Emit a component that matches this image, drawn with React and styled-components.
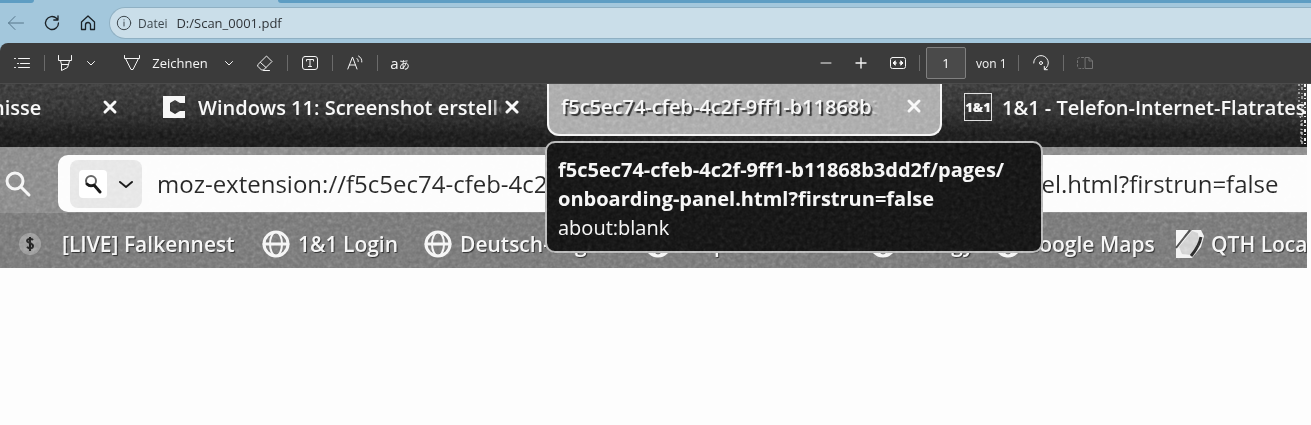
import React from 'react';
import styled, { createGlobalStyle } from 'styled-components';

const GlobalStyle = createGlobalStyle`
    * {
        box-sizing: border-box;
    }

    body {
        margin: 0;
        background: #fdfdfd;
        font-family: 'Open Sans', 'Noto Sans', sans-serif;
    }

    button {
        display: flex;
        align-items: center;
        justify-content: center;
        margin: 0;
        padding: 0;
        border: 0;
        background: none;
        color: inherit;
        font: inherit;
        cursor: pointer;
    }

    svg {
        display: block;
        flex: none;
    }
`;

const Page = styled.div`
    min-height: 100vh;
    overflow: hidden;
    background: #fdfdfd;
`;

/* Browser chrome */

const Chrome = styled.header`
    background: #a3c7dc;
`;

const TabStrip = styled.div`
    display: flex;
    height: 3px;
    gap: 244px;
`;

const TabEdge = styled.div`
    flex: ${({ $grow }) => ($grow ? '1' : '0 0 34px')};
    background: #5e9dc3;
    border-radius: ${({ $grow }) => ($grow ? '0 0 0 3px' : '0 0 3px 0')};
`;

const AddressRow = styled.div`
    display: flex;
    align-items: center;
    height: 40px;
    padding-left: 4px;
`;

const NavButton = styled.button`
    width: 24px;
    height: 24px;
    margin-right: 12px;
    color: #1b2227;

    &:disabled {
        color: #56768a;
    }
`;

const AddressField = styled.form`
    display: flex;
    flex: 1;
    align-items: center;
    height: 32px;
    margin-left: -3px;
    padding-left: 6px;
    border: 1px solid #8fb0c3;
    border-right: 0;
    border-radius: 16px 0 0 16px;
    background: #cadee9;
    color: #3d474d;
    font-size: 12px;
`;

const Scheme = styled.label`
    margin: 0 9px 0 6px;
    font-weight: 500;
`;

const AddressInput = styled.input`
    flex: 1;
    min-width: 0;
    padding: 0;
    border: 0;
    outline: 0;
    background: none;
    color: #303539;
    font: 13px 'Open Sans', sans-serif;
`;

/* PDF toolbar */

const ToolbarWrap = styled.div`
    background: #a3c7dc;
`;

const Toolbar = styled.div`
    display: flex;
    align-items: center;
    height: 41px;
    padding: 0 214px 0 10px;
    border-bottom: 1px solid #4b4b4b;
    border-radius: 8px 0 0 0;
    background: #3b3b3b;
    color: #f5f5f5;
    font-size: 13px;
`;

const Tool = styled.button`
    width: ${({ $w }) => $w || 24}px;
    height: 32px;
    gap: 12px;
    margin-right: ${({ $mr }) => $mr || 0}px;

    &:disabled {
        color: #747474;
    }
`;

const Divider = styled.span`
    width: 1px;
    height: 16px;
    margin-right: ${({ $mr }) => $mr || 0}px;
    background: #6b6b6b;
`;

const Spacer = styled.span`
    flex: 1;
`;

const PageInput = styled.input`
    width: 40px;
    height: 32px;
    margin: 0 10px 0 6px;
    padding: 0;
    border: 1px solid #808080;
    border-radius: 2px;
    background: #4a4a4a;
    color: #fff;
    font: 13px 'Open Sans', sans-serif;
    text-align: center;
`;

const PageCount = styled.label`
    width: 42px;
    font-size: 12px;
    white-space: nowrap;
`;

const Translate = styled.span`
    font: 15px 'Open Sans', 'Noto Sans CJK JP', sans-serif;

    small {
        font-size: 11px;
    }
`;

/* Scanned sheet */

const Sheet = styled.main`
    position: relative;
    margin-right: 4px;
    overflow: hidden;
`;

const Grain = styled.svg`
    position: absolute;
    inset: 0;
    width: 100%;
    height: 100%;
    pointer-events: none;
    mix-blend-mode: soft-light;
`;

const WornEdge = styled.svg`
    position: absolute;
    top: 0;
    right: 0;
    pointer-events: none;
`;

const ScanTabs = styled.div`
    display: flex;
    height: 63px;
    background: linear-gradient(#333 0, #282828 45%, #161616 80%);
    color: #f7f7f7;
    font-size: 20px;
    font-weight: 600;
`;

const ScanTab = styled.div`
    display: flex;
    flex: ${({ $w }) => ($w ? `0 0 ${$w}px` : '1 0 0')};
    align-items: center;
    min-width: 0;
    height: ${({ $active }) => ($active ? 52 : 46)}px;
    padding: ${({ $pad }) => $pad};
    border: ${({ $active }) => ($active ? '2px solid #f4f4f4' : '0')};
    border-top: 0;
    border-radius: 0 0 12px 12px;
    background: ${({ $active }) => ($active ? '#a6a6a6' : 'none')};
    text-shadow: ${({ $active }) => ($active ? '2px 2px 1px #222' : 'none')};
`;

const TabTitle = styled.span`
    flex: 1;
    min-width: 0;
    overflow: hidden;
    white-space: nowrap;
    mask-image: ${({ $fade }) => ($fade ? 'linear-gradient(to left, transparent, #000 10px)' : 'none')};
`;

const ScrolledTitle = styled(TabTitle)`
    margin-left: -8px;
`;

const Favicon = styled.span`
    display: flex;
    margin-right: 12px;
`;

const BoxLogo = styled.span`
    width: 28px;
    height: 28px;
    margin-right: 10px;
    border: 1px solid #ddd;
    font-size: 13px;
    font-weight: 800;
    line-height: 26px;
    text-align: center;
`;

const CloseButton = styled.button`
    width: 16px;
    height: 24px;
    margin-left: ${({ $ml }) => $ml || 8}px;
`;

const UrlRow = styled.div`
    display: flex;
    align-items: center;
    height: 66px;
    padding: 7px 0 0 2px;
    background: #858585;
    color: #f4f4f4;
`;

const UrlBar = styled.form`
    display: flex;
    flex: 1;
    align-items: center;
    height: 57px;
    margin-left: 26px;
    padding-left: 12px;
    border-radius: 10px 0 0 10px;
    background: #fcfcfc;
    color: #111;
`;

const EngineButton = styled.button`
    width: 72px;
    height: 48px;
    gap: 12px;
    margin-right: 15px;
    border-radius: 8px;
    background: #e5e5e5;
`;

const EngineIcon = styled.span`
    padding: 4px;
    border-radius: 4px;
    background: #fff;
`;

const UrlInput = styled.input`
    flex: 1;
    min-width: 0;
    padding: 0;
    border: 0;
    outline: 0;
    background: none;
    color: #1d1d1d;
    font: 24px 'Open Sans', sans-serif;
`;

const Bookmarks = styled.nav`
    display: flex;
    align-items: center;
    height: 55px;
    padding: 7px 0 0 18px;
    background: #727272;
`;

const Bookmark = styled.a`
    display: flex;
    flex: 0 0 ${({ $w }) => $w}px;
    align-items: center;
    gap: ${({ $gap }) => $gap || 8}px;
    color: #f5f5f5;
    font-size: 21px;
    font-weight: 600;
    line-height: 28px;
    text-decoration: none;
    text-shadow: 1px 1px 1px #222;
    white-space: nowrap;
`;

const Tooltip = styled.div`
    position: absolute;
    top: 57px;
    left: 545px;
    width: 498px;
    padding: 12px 11px 9px;
    border: 2px solid #b5b5b5;
    border-radius: 10px;
    background: #101010;
    color: #f5f5f5;
    font-size: 20px;
    font-weight: 700;
    line-height: 29px;

    p {
        margin: 0;
        white-space: nowrap;
    }
`;

const TooltipUrl = styled.p`
    font-weight: 400;
`;

const Stroke = ({ size = 16, box = 16, w = 1, children }) => (
    <svg
        width={size}
        height={size}
        viewBox={`0 0 ${box} ${box}`}
        fill="none"
        stroke="currentColor"
        strokeWidth={w}
        strokeLinecap="round"
        strokeLinejoin="round"
        aria-hidden="true"
    >
        {children}
    </svg>
);

const Chevron = () => (
    <Stroke size={8} box={8}>
        <path d="M.5 2.5 4 6l3.5-3.5" />
    </Stroke>
);

const Cross = () => (
    <Stroke w={3}>
        <path d="M3 3l10 10M13 3 3 13" />
    </Stroke>
);

const Globe = () => (
    <Stroke size={28} box={28} w={3}>
        <circle cx="14" cy="14" r="12" />
        <ellipse cx="14" cy="14" rx="6" ry="12" strokeWidth="2" />
        <path d="M2 14h24" />
    </Stroke>
);

const Coin = () => (
    <svg width="24" height="24" viewBox="0 0 24 24" aria-hidden="true">
        <circle cx="12" cy="12" r="11" fill="#969696" />
        <path d="M15 8c-2-2-6-1-6 1s6 2 6 5-4 3-6 1M12 5v14" fill="none" stroke="#1c1c1c" strokeWidth="2" />
    </svg>
);

const Locator = () => (
    <svg width="30" height="30" viewBox="0 0 30 30" aria-hidden="true">
        <path d="M1 1h13L1 18z" fill="#f5f5f5" />
        <path d="M17 1h9l3 6-3 11-9 11H1V19z" fill="#f0f0f0" />
        <path d="M17 2 4 18l3 7 9 1 8-15-1-7z" fill="#cfcfcf" />
        <path d="M15 1 1 19" fill="none" stroke="#444" strokeWidth="2" />
        <path d="M26 8c-1 6-5 13-10 19" fill="none" stroke="#222" strokeWidth="3" />
    </svg>
);

const bookmarks = [
    { label: '[LIVE] Falkennest', icon: <Coin />, w: 244, gap: 20 },
    { label: '1&1 Login', icon: <Globe />, w: 162 },
    { label: 'Deutsch-Englisch', icon: <Globe />, w: 220 },
    { label: 'Amprion', icon: <Globe />, w: 225 },
    { label: 'Energy', icon: <Globe />, w: 125 },
    { label: 'Google Maps', icon: <Globe />, w: 181, gap: 2 },
    { label: 'QTH Locator', icon: <Locator />, w: 150, gap: 6 },
];

const App = () => {
    return (
        <Page>
            <GlobalStyle />
            <Chrome>
                <TabStrip>
                    <TabEdge />
                    <TabEdge $grow />
                </TabStrip>
                <AddressRow>
                    <NavButton type="button" disabled aria-label="Zurück">
                        <Stroke><path d="M15.500 8H.5M7 1.500.5 8 7 14.500" /></Stroke>
                    </NavButton>
                    <NavButton type="button" aria-label="Aktualisieren">
                        <Stroke w={1.3}><path d="M14.500 8A6.500 6.500 0 1 1 12.500 3.300L14 5M14 .8V5H9.800" /></Stroke>
                    </NavButton>
                    <NavButton type="button" aria-label="Startseite">
                        <Stroke w={1.3}><path d="M1.500 7 8 1l6.500 6v7.500h-4V10a2 2 0 0 0-5 0v4.500h-4z" /></Stroke>
                    </NavButton>
                    <AddressField>
                        <Stroke>
                            <circle cx="8" cy="8" r="6.700" />
                            <path d="M8 7v4M8 4.800v.2" />
                        </Stroke>
                        <Scheme htmlFor="address">Datei</Scheme>
                        <AddressInput id="address" defaultValue="D:/Scan_0001.pdf" />
                    </AddressField>
                </AddressRow>
            </Chrome>

            <ToolbarWrap>
                <Toolbar>
                    <Tool type="button" $mr={10} aria-label="Inhaltsverzeichnis">
                        <Stroke>
                            <path d="M4.500 3.500h11M6.500 8.500h9M4.500 12.500h11M.5 3.500h1M3.500 8.500h1M.5 12.500h1" />
                        </Stroke>
                    </Tool>
                    <Divider $mr={8} />
                    <Tool type="button" $mr={2} aria-label="Hervorheben">
                        <Stroke><path d="M1.500.5v5h13v-5M3.500 5.500l1 4h7l1-4M4.500 9.500v6l6-3 1-3" /></Stroke>
                    </Tool>
                    <Tool type="button" $mr={18} aria-label="Hervorhebungsfarbe"><Chevron /></Tool>
                    <Tool type="button" $w={90} $mr={6}>
                        <Stroke><path d="M.5.5v3h15v-3M1.500 3.500 7 14.500h2l5.500-11" /></Stroke>
                        Zeichnen
                    </Tool>
                    <Tool type="button" $mr={12} aria-label="Stifteigenschaften"><Chevron /></Tool>
                    <Tool type="button" $mr={10} aria-label="Radieren">
                        <Stroke><path d="M1 9.500 9.500 1 15 6.500 6.500 15H4.500L1 11.500zM3.500 7.500 9 12.500M6.500 15.500h6" /></Stroke>
                    </Tool>
                    <Divider $mr={10} />
                    <Tool type="button" $mr={10} aria-label="Text hinzufügen">
                        <Stroke>
                            <rect x=".5" y="1.500" width="15" height="13" rx="2.500" />
                            <path d="M4.500 6V4.500h7V6M8 4.500v7M6.500 11.500h3" />
                        </Stroke>
                    </Tool>
                    <Divider $mr={10} />
                    <Tool type="button" $mr={10} aria-label="Laut vorlesen">
                        <Stroke><path d="M.8 14 5.500 2l4.500 12M2.300 10h6M10 3.500c1 .8 1.300 2 1.200 3M11.500 1c2.500 1.500 3.500 3.500 3.300 6" /></Stroke>
                    </Tool>
                    <Divider $mr={10} />
                    <Tool type="button" aria-label="Übersetzen"><Translate>a<small>あ</small></Translate></Tool>

                    <Spacer />

                    <Tool type="button" $mr={11} aria-label="Verkleinern">
                        <Stroke size={12} box={12}><path d="M1 6h10" /></Stroke>
                    </Tool>
                    <Tool type="button" $mr={13} aria-label="Vergrößern">
                        <Stroke size={12} box={12} w={1.4}><path d="M1 6h10M6 1v10" /></Stroke>
                    </Tool>
                    <Tool type="button" $mr={9} aria-label="An Breite anpassen">
                        <Stroke>
                            <rect x=".5" y="2.500" width="15" height="11" rx="2" />
                            <path d="M6.500 8h-3M5 6 3 8l2 2zM9.500 8h3M11 6l2 2-2 2z" fill="currentColor" />
                        </Stroke>
                    </Tool>
                    <Divider />
                    <PageInput id="page" defaultValue="1" />
                    <PageCount htmlFor="page">von 1</PageCount>
                    <Divider $mr={10} />
                    <Tool type="button" $mr={10} aria-label="Drehen">
                        <Stroke>
                            <path d="M.7 8A7.300 7.300 0 1 1 11.500 14.300M11.300 11.500v3.200h3" />
                            <circle cx="8" cy="8" r="1.500" />
                        </Stroke>
                    </Tool>
                    <Divider $mr={9} />
                    <Tool type="button" disabled aria-label="Seitenansicht">
                        <Stroke>
                            <path d="M8.500 2.500h3.500l3.500 3.500v7.500h-7zM12 2.500V6h3.500" />
                            <path d="M6.500 2.500H2.500a2 2 0 0 0-2 2v7a2 2 0 0 0 2 2h4" strokeDasharray="2 2" />
                        </Stroke>
                    </Tool>
                </Toolbar>
            </ToolbarWrap>

            <Sheet>
                <ScanTabs>
                    <ScanTab $w={162} $pad="0 44px 0 0">
                        <ScrolledTitle>nisse</ScrolledTitle>
                        <CloseButton type="button" aria-label="Tab schließen"><Cross /></CloseButton>
                    </ScanTab>
                    <ScanTab $w={385} $pad="0 27px 0 0">
                        <Favicon>
                            <svg width="24" height="24" viewBox="0 0 24 24" aria-hidden="true">
                                <path d="M1 1h22v7h-5l-5-3-5 3v8l5 3 5-3h5v7H1z" fill="#f5f5f5" />
                            </svg>
                        </Favicon>
                        <TabTitle $fade>Windows 11: Screenshot erstellen</TabTitle>
                        <CloseButton type="button" $ml={2} aria-label="Tab schließen"><Cross /></CloseButton>
                    </ScanTab>
                    <ScanTab $w={395} $pad="0 18px 6px 12px" $active>
                        <TabTitle $fade>f5c5ec74-cfeb-4c2f-9ff1-b11868b3dd2f</TabTitle>
                        <CloseButton type="button" $ml={28} aria-label="Tab schließen"><Cross /></CloseButton>
                    </ScanTab>
                    <ScanTab $pad="0 0 0 22px">
                        <BoxLogo>1&amp;1</BoxLogo>
                        <TabTitle>1&amp;1 - Telefon-Internet-Flatrates</TabTitle>
                    </ScanTab>
                </ScanTabs>

                <UrlRow>
                    <Stroke size={30} box={30} w={3}>
                        <circle cx="13" cy="12" r="8" />
                        <path d="m19 18 8 8" />
                    </Stroke>
                    <UrlBar>
                        <EngineButton type="button" aria-label="Suchmaschine">
                            <EngineIcon>
                                <Stroke size={20} box={20} w={3}>
                                    <circle cx="8" cy="7" r="5" stroke="#555" strokeWidth="2" />
                                    <path d="M4 10c2 2 5 2 7 1l6 7" />
                                </Stroke>
                            </EngineIcon>
                            <Stroke size={14} box={14} w={2}><path d="m1 5 6 5 6-5" /></Stroke>
                        </EngineButton>
                        <UrlInput
                            aria-label="Adresse"
                            defaultValue="moz-extension://f5c5ec74-cfeb-4c2f-9ff1-b11868b3dd2f/pages/onboarding-panel.html?firstrun=false"
                        />
                    </UrlBar>
                </UrlRow>

                <Bookmarks>
                    {bookmarks.map(({ label, icon, w, gap }) => (
                        <Bookmark key={label} href="#" $w={w} $gap={gap}>
                            {icon}
                            {label}
                        </Bookmark>
                    ))}
                </Bookmarks>

                <Tooltip role="tooltip">
                    <p>f5c5ec74-cfeb-4c2f-9ff1-b11868b3dd2f/pages/</p>
                    <p>onboarding-panel.html?firstrun=false</p>
                    <TooltipUrl>about:blank</TooltipUrl>
                </Tooltip>

                <WornEdge width="9" height="60" viewBox="0 0 9 60" fill="none" stroke="#eee" aria-hidden="true">
                    <path d="M1 0v28l2 8v24" strokeDasharray="2 3 1 2" />
                    <path d="M4 0v60" strokeDasharray="1 2 3 3" />
                    <path d="M7 0v60" strokeWidth="2" strokeDasharray="3 2 1 3" />
                </WornEdge>

                <Grain aria-hidden="true">
                    <filter id="grain">
                        <feTurbulence type="fractalNoise" baseFrequency="0.25" numOctaves="3" />
                        <feColorMatrix type="saturate" values="0" />
                    </filter>
                    <rect width="100%" height="100%" filter="url(#grain)" />
                </Grain>
            </Sheet>
        </Page>
    );
};

export default App;
